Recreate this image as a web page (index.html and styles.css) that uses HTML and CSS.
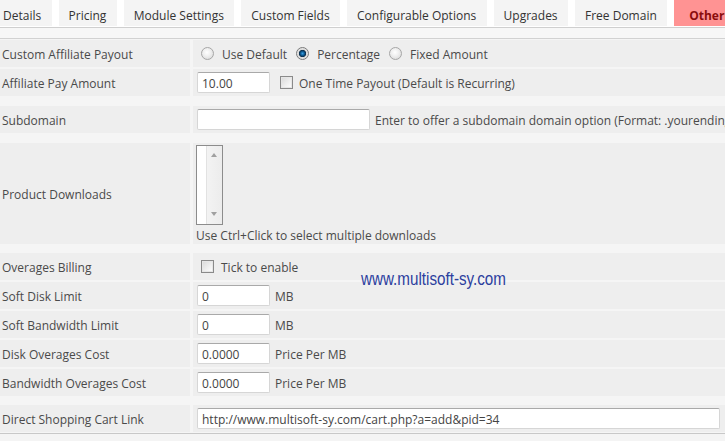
FILE: index.html
```html
<!DOCTYPE html>
<html>
<head>
<meta charset="utf-8">
<link rel="stylesheet" href="styles.css">
</head>
<body>
<nav class="tabs">
  <a class="tab tab-first">Details</a>
  <a class="tab">Pricing</a>
  <a class="tab">Module Settings</a>
  <a class="tab">Custom Fields</a>
  <a class="tab">Configurable Options</a>
  <a class="tab">Upgrades</a>
  <a class="tab">Free Domain</a>
  <a class="tab tab-active">Other</a>
</nav>
<div class="spacer"></div>
<div class="tabbox">
  <section class="group">
    <div class="row">
      <div class="label">Custom Affiliate Payout</div>
      <div class="field">
        <label class="opt"><span class="radio"></span><span class="txt">Use Default</span></label>
        <label class="opt"><span class="radio radio-on"></span><span class="txt">Percentage</span></label>
        <label class="opt"><span class="radio"></span><span class="txt">Fixed Amount</span></label>
      </div>
    </div>
    <div class="row">
      <div class="label">Affiliate Pay Amount</div>
      <div class="field">
        <span class="input input-small">10.00</span>
        <label class="opt opt-check"><span class="check"></span><span class="txt">One Time Payout (Default is Recurring)</span></label>
      </div>
    </div>
  </section>
  <section class="group">
    <div class="row">
      <div class="label">Subdomain</div>
      <div class="field">
        <span class="input input-medium"></span>
        <span class="txt note">Enter to offer a subdomain domain option (Format: .yourendingdomain.com)</span>
      </div>
    </div>
  </section>
  <section class="group">
    <div class="row row-tall">
      <div class="label">Product Downloads</div>
      <div class="field field-stack">
        <div class="listbox">
          <div class="listbox-body"></div>
          <div class="scrollbar">
            <span class="arrow arrow-up"></span>
            <span class="arrow arrow-down"></span>
          </div>
        </div>
        <span class="hint">Use Ctrl+Click to select multiple downloads</span>
      </div>
    </div>
  </section>
  <section class="group">
    <div class="row">
      <div class="label">Overages Billing</div>
      <div class="field">
        <label class="opt opt-tick"><span class="check"></span><span class="txt">Tick to enable</span></label>
      </div>
    </div>
    <div class="row">
      <div class="label">Soft Disk Limit</div>
      <div class="field"><span class="input input-small">0</span><span class="txt unit">MB</span></div>
    </div>
    <div class="row">
      <div class="label">Soft Bandwidth Limit</div>
      <div class="field"><span class="input input-small">0</span><span class="txt unit">MB</span></div>
    </div>
    <div class="row">
      <div class="label">Disk Overages Cost</div>
      <div class="field"><span class="input input-small">0.0000</span><span class="txt unit">Price Per MB</span></div>
    </div>
    <div class="row">
      <div class="label">Bandwidth Overages Cost</div>
      <div class="field"><span class="input input-small">0.0000</span><span class="txt unit">Price Per MB</span></div>
    </div>
  </section>
  <section class="group group-last">
    <div class="row">
      <div class="label">Direct Shopping Cart Link</div>
      <div class="field"><span class="input input-wide">http://www.multisoft-sy.com/cart.php?a=add&amp;pid=34</span></div>
    </div>
  </section>
  <div class="watermark">www.multisoft-sy.com</div>
</div>
</body>
</html>
```
FILE: styles.css
```css
html, body {
  margin: 0;
  padding: 0;
}
body {
  width: 725px;
  height: 441px;
  overflow: hidden;
  background: #f4f4f4;
  font-family: "Open Sans", "DejaVu Sans", sans-serif;
  font-size: 12px;
  color: #4a4a4a;
}

/* tabs */
.tabs {
  display: flex;
  gap: 7px;
  height: 27px;
  margin-left: -7px;
  background: #fff;
  border-bottom: 1px solid #cfcfcf;
  white-space: nowrap;
}
.tab {
  display: flex;
  align-items: center;
  flex-shrink: 0;
  box-sizing: border-box;
  height: 26px;
  padding: 4px 10.4px 0 10px;
  background: #f4f4f4;
  color: #333;
}
.tab-active {
  background: #ff9393;
  color: #8a0d0d;
  font-weight: bold;
  padding-left: 15px;
}

.spacer {
  height: 10px;
  background: #f7f7f7;
}

/* content */
.tabbox {
  position: relative;
  display: flex;
  flex-direction: column;
  gap: 10px;
  padding: 1px 0 0 0;
  background: #f5f5f5;
  border-top: 1px solid #d2d2d2;
  border-bottom: 1px solid #c8c8c8;
}
.group {
  display: flex;
  flex-direction: column;
  gap: 2px;
}
.group-last {
  margin-top: -1px;
  padding-bottom: 1px;
}
.row {
  display: grid;
  grid-template-columns: 190px 1fr;
  column-gap: 3px;
  height: 27px;
}
.row-tall {
  height: 100px;
}
.label {
  display: flex;
  align-items: center;
  box-sizing: border-box;
  padding: 2px 0 0 2px;
  background: #eeeeee;
  white-space: nowrap;
}
.field {
  display: flex;
  align-items: center;
  padding-left: 4px;
  background: #eeeeee;
  white-space: nowrap;
  min-width: 0;
}
.txt {
  padding-top: 2px;
}
.field-stack {
  flex-direction: column;
  align-items: flex-start;
  justify-content: flex-start;
  padding-left: 3px;
  padding-top: 2px;
}

/* controls */
.opt {
  display: inline-flex;
  align-items: center;
  flex-shrink: 0;
  gap: 8px;
  margin-right: 9px;
}
.opt:first-child {
  margin-left: 4px;
}
.opt-check {
  margin-left: 10px;
  gap: 6px;
}
.opt-tick {
  gap: 7px;
}
.radio {
  box-sizing: border-box;
  width: 13px;
  height: 13px;
  border-radius: 50%;
  border: 1px solid #a6a6a6;
  background: radial-gradient(circle at 45% 40%, #ffffff 0, #f0f0f0 40%, #d4d4d4 100%);
}
.radio-on {
  border-color: #7a7a7a;
  background: radial-gradient(circle at 50% 50%, #3aa0e0 0, #0d5e9a 1.8px, #0b2a44 3.4px, #d9d9d9 3.9px, #f6f6f6 100%);
}
.check {
  box-sizing: border-box;
  width: 13px;
  height: 13px;
  border: 1px solid #8a8a8a;
  background: linear-gradient(135deg, #d8d8d8 0%, #f0f0f0 60%, #ffffff 100%);
  box-shadow: inset 0 0 0 1px #e6e6e6;
}
.input {
  box-sizing: border-box;
  display: inline-flex;
  align-items: center;
  flex-shrink: 0;
  height: 21px;
  padding: 1px 4px 0 4px;
  background: #fff;
  border: 1px solid #d6d6d6;
  border-top-color: #a9a9a9;
  border-radius: 2px;
  color: #444;
}
.input-small {
  width: 73px;
}
.input-medium {
  width: 173px;
}
.input-wide {
  width: 523px;
}
.unit {
  margin-left: 5px;
}
.note {
  margin-left: 5px;
}

.listbox {
  box-sizing: border-box;
  display: flex;
  width: 27px;
  height: 80px;
  border: 1px solid #8c8c8c;
  background: #fff;
}
.listbox-body {
  width: 9px;
  background: #fff;
}
.scrollbar {
  position: relative;
  flex: 1;
  background: linear-gradient(90deg, #f3f3f3, #ececec);
  border-left: 1px solid #e2e2e2;
}
.arrow {
  position: absolute;
  left: 4px;
  width: 0;
  height: 0;
  border-left: 3.5px solid transparent;
  border-right: 3.5px solid transparent;
}
.arrow-up {
  top: 7px;
  border-bottom: 4px solid #a0a0a0;
}
.arrow-down {
  bottom: 8px;
  border-top: 4px solid #a0a0a0;
}
.hint {
  margin-top: 2px;
}

.watermark {
  position: absolute;
  left: 361px;
  top: 230px;
  font-family: "Liberation Sans Narrow", "Liberation Sans", sans-serif;
  font-size: 19px;
  line-height: 20px;
  color: #2c3f9e;
  white-space: nowrap;
  transform: scaleX(0.8);
  transform-origin: left center;
}
```
